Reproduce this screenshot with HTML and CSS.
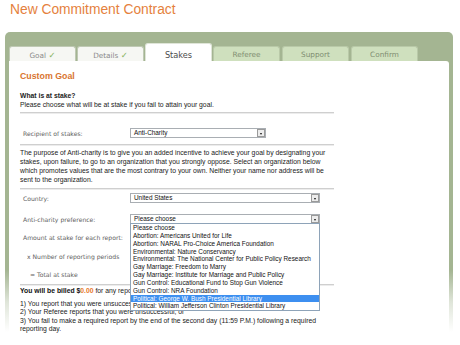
FILE: index.html
```html
<!DOCTYPE html>
<html>
<head>
<meta charset="utf-8">
<link rel="stylesheet" href="styles.css">
</head>
<body>
<h1 class="title">New Commitment Contract</h1>
<div class="frame">
  <div class="tabs">
    <div class="tab done">Goal <span class="chk">✓</span></div>
    <div class="tab done">Details <span class="chk">✓</span></div>
    <div class="tab active">Stakes</div>
    <div class="tab todo">Referee</div>
    <div class="tab todo">Support</div>
    <div class="tab todo">Confirm</div>
  </div>
  <div class="panel">
    <h2 class="section-title">Custom Goal</h2>
    <p class="q"><b>What is at stake?</b><br>Please choose what will be at stake if you fail to attain your goal.</p>
    <div class="rule r1"></div>
    <div class="row recipient">
      <span class="label">Recipient of stakes:</span>
      <div class="select short">Anti-Charity<span class="arrow"></span></div>
    </div>
    <div class="rule r2"></div>
    <p class="desc">The purpose of Anti-charity is to give you an added incentive to achieve your goal by designating your stakes, upon failure, to go to an organization that you strongly oppose. Select an organization below which promotes values that are the most contrary to your own. Neither your name nor address will be sent to the organization.</p>
    <div class="rule r3"></div>
    <div class="row country">
      <span class="label">Country:</span>
      <div class="select long">United States<span class="arrow"></span></div>
    </div>
    <div class="row anti">
      <span class="label">Anti-charity preference:</span>
      <div class="select long open">Please choose<span class="arrow"></span>
        <ul class="list">
          <li>Please choose</li>
          <li>Abortion: Americans United for Life</li>
          <li>Abortion: NARAL Pro-Choice America Foundation</li>
          <li>Environmental: Nature Conservancy</li>
          <li>Environmental: The National Center for Public Policy Research</li>
          <li>Gay Marriage: Freedom to Marry</li>
          <li>Gay Marriage: Institute for Marriage and Public Policy</li>
          <li>Gun Control: Educational Fund to Stop Gun Violence</li>
          <li>Gun Control: NRA Foundation</li>
          <li class="hl">Political: George W. Bush Presidential Library</li>
          <li>Political: William Jefferson Clinton Presidential Library</li>
        </ul>
      </div>
    </div>
    <div class="row amount">
      <span class="label">Amount at stake for each report:</span>
    </div>
    <div class="row periods">
      <span class="label ind1">x Number of reporting periods</span>
    </div>
    <div class="row total">
      <span class="label ind2">= Total at stake</span>
    </div>
    <div class="rule r4"></div>
    <p class="bill"><b>You will be billed $<span class="amt">0.00</span></b> for any report in which:</p>
    <p class="conds">1) You report that you were unsuccessful; or<br>2) Your Referee reports that you were unsuccessful; or<br>3) You fail to make a required report by the end of the second day (11:59 P.M.) following a required reporting day.</p>
  </div>
</div>
</body>
</html>
```

FILE: styles.css
```css
html, body {
  margin: 0;
  padding: 0;
  background: #fff;
}
body {
  font-family: "Liberation Sans", Arial, sans-serif;
  overflow: hidden;
  width: 460px;
  height: 345px;
}
.title {
  margin: 0 0 13px 10px;
  padding-top: 1px;
  height: 18px;
  font-weight: normal;
  font-size: 13.8px;
  line-height: 18px;
  color: #e5813d;
}
.frame {
  margin-left: 5px;
  width: 448px;
  height: 313px;
  padding: 11px 4px 0 4px;
  box-sizing: border-box;
  border-radius: 5px 5px 0 0;
  background: linear-gradient(to bottom, #a4b592 0, #a4b592 238px, rgba(164,181,146,0.35) 270px, rgba(164,181,146,0) 300px);
}
.tabs {
  display: flex;
  align-items: flex-end;
  gap: 1px;
  height: 18px;
}
.tab {
  width: 67px;
  box-sizing: border-box;
  text-align: center;
  font-family: "DejaVu Sans", Verdana, sans-serif;
  font-size: 7.3px;
  line-height: 14px;
  height: 15px;
  padding-top: 1px;
  border-radius: 3px 3px 0 0;
}
.tab.done {
  background: #f6f7f3;
  border: 1px solid #bfc9b4;
  border-bottom: 0;
  color: #8a8a8a;
}
.chk {
  color: #86b35e;
  font-size: 8.5px;
}
.tab.active {
  background: #fff;
  height: 18px;
  padding-top: 4px;
  font-size: 8.2px;
  color: #4d4d4d;
  border: 1px solid #dfe5d8;
  border-bottom: 0;
}
.tab.todo {
  background: #cfe0be;
  border: 1px solid #b9c9a8;
  border-bottom: 0;
  color: #7f8e72;
}
.tab.todo + .tab.todo {
  margin-left: 1px;
}
.panel {
  background: #fff;
  border-radius: 0 3px 0 0;
  padding: 10px 0 0 11px;
  height: 284px;
  box-sizing: border-box;
  font-size: 6.8px;
  color: #222;
}
.section-title {
  margin: 0;
  font-size: 8.8px;
  line-height: 11px;
  color: #d9752f;
  font-weight: bold;
}
.q {
  margin: 9px 0 0 0;
  line-height: 9px;
}
.rule {
  width: 314px;
  height: 1px;
  background: #cfcfcf;
  box-shadow: 0 1px 0 #ececec;
}
.r1 { margin-top: 3px; }
.r2 { margin-top: 6px; }
.r3 { margin-top: 4px; }
.r4 { margin-top: 4.5px; }
.row {
  display: flex;
  align-items: center;
  height: 10px;
  padding-left: 3px;
}
.recipient { margin-top: 15px; }
.country { margin-top: 4px; }
.anti { margin-top: 11px; }
.amount { margin-top: 8px; }
.periods { margin-top: 9px; }
.total { margin-top: 8px; }
.label {
  width: 107px;
  flex: none;
  font-family: "DejaVu Sans", Verdana, sans-serif;
  font-size: 6.1px;
  color: #5e5e5e;
  white-space: nowrap;
}
.ind1 { padding-left: 4px; }
.ind2 { padding-left: 7px; }
.select {
  position: relative;
  height: 10px;
  box-sizing: border-box;
  border: 1px solid #a9aeb3;
  background: #fff;
  font-size: 6.4px;
  line-height: 8px;
  padding-left: 3px;
  color: #111;
}
.select.short { width: 136px; }
.select.long { width: 190px; }
.arrow {
  position: absolute;
  right: 0;
  top: 0;
  width: 8px;
  height: 8px;
  box-sizing: border-box;
  background: #ececec;
  border: 1px solid #9a9a9a;
}
.arrow::after {
  content: "";
  position: absolute;
  left: 1.5px;
  top: 2.5px;
  border-left: 1.5px solid transparent;
  border-right: 1.5px solid transparent;
  border-top: 2px solid #111;
}
.list {
  position: absolute;
  z-index: 5;
  left: -1px;
  top: 8px;
  width: 190px;
  box-sizing: border-box;
  margin: 0;
  padding: 0;
  list-style: none;
  background: #fff;
  border: 1px solid #8ea3b8;
}
.list li {
  height: 7.85px;
  line-height: 7.85px;
  padding-left: 2px;
  font-size: 6.4px;
  white-space: nowrap;
  color: #111;
}
.list li.hl {
  background: #3d8ff0;
  color: #fff;
}
.bill {
  margin: 1px 0 0 0;
  line-height: 9px;
}
.bill b {
  font-weight: bold;
  color: #111;
}
.amt {
  color: #e8782c;
}
.conds {
  margin: 5px 0 0 0;
  width: 318px;
  line-height: 8.6px;
}
.desc {
  margin: 3px 0 0 0;
  width: 318px;
  line-height: 9px;
}
```
